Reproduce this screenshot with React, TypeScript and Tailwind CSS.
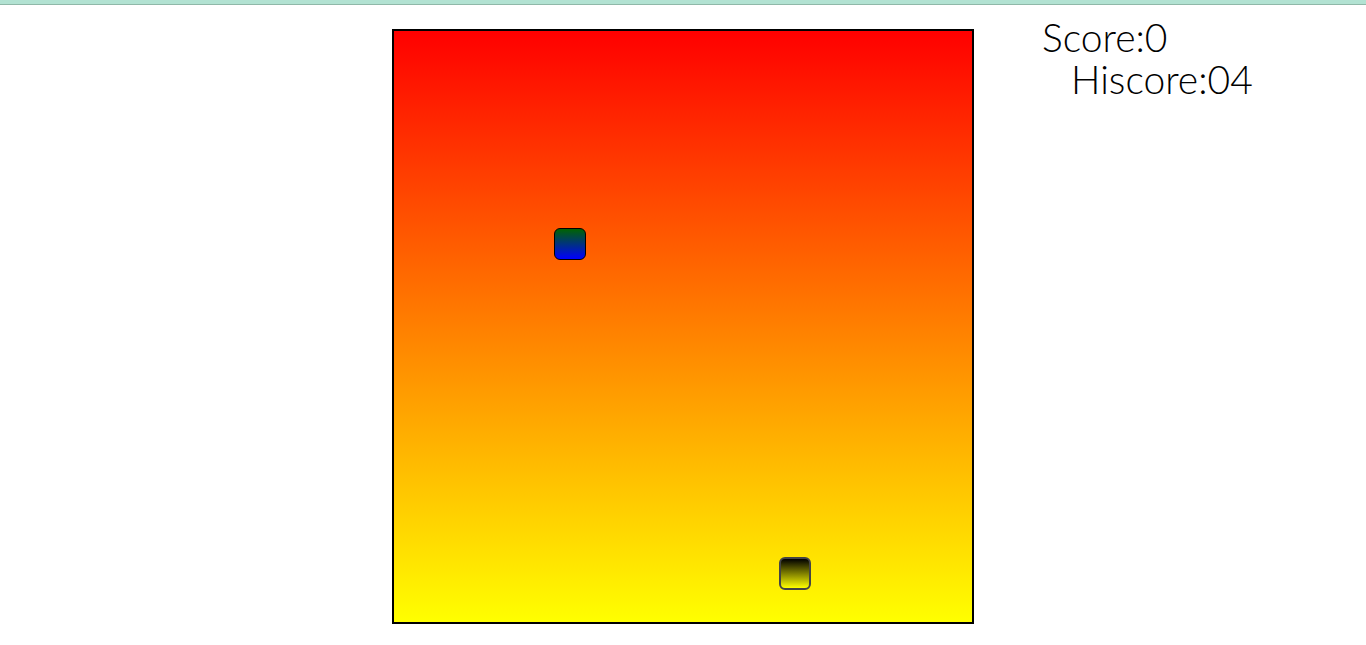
export default function App() {
  return (
    <div className="min-h-[645px] bg-white" style={{ fontFamily: "Lato, 'Open Sans', sans-serif" }}>
      <div className="h-[5px] bg-[#b2e2d2] border-b border-[#8fb8a8]" />
      <div className="grid grid-cols-[1fr_auto_1fr] pt-6">
        <div />
        <div className="relative w-[582px] h-[595px] border-2 border-black bg-[linear-gradient(to_bottom,#ff0000,#ffff00)]">
          {/* food */}
          <div className="absolute left-[160px] top-[197px] w-8 h-8 rounded-md border border-black bg-[linear-gradient(to_bottom,#006400,#0000ff)]" />
          {/* snake head */}
          <div className="absolute left-[385px] top-[526px] w-8 h-[33px] rounded-md border-2 border-[#444444] bg-[linear-gradient(to_bottom,#000000,#ffff00)]" />
        </div>
        <div className="pl-[68px] -mt-[13px] text-[39px] font-light leading-[42px] text-black">
          <div>Score:0</div>
          <div className="pl-[29px]">Hiscore:04</div>
        </div>
      </div>
    </div>
  );
}
